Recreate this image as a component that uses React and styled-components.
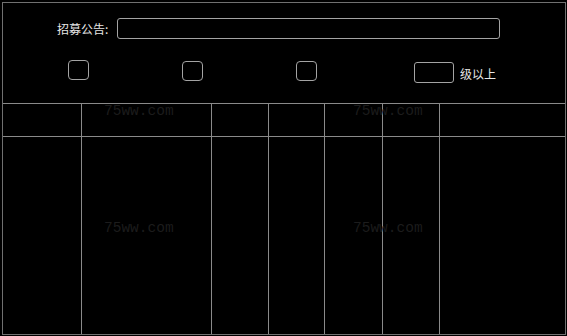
import React from "react";
import styled, { createGlobalStyle } from "styled-components";

const Global = createGlobalStyle`
  html, body { margin: 0; padding: 0; background: #000; }
  body { font-family: "Noto Sans CJK SC", "Noto Sans", sans-serif; }
  * { box-sizing: border-box; }
`;

const Frame = styled.div`
  margin: 2px 0 0 2px;
  width: 564px;
  height: 333px;
  border: 1px solid #707070;
  background: #000;
  display: flex;
  flex-direction: column;
`;

const Form = styled.div`
  height: 100px;
  padding-top: 14px;
  display: flex;
  flex-direction: column;
  gap: 21px;
`;

const TitleRow = styled.div`
  display: grid;
  grid-template-columns: 60px 383px;
  padding-left: 54px;
  align-items: center;
`;

const Label = styled.span`
  color: #e6e6e6;
  font-size: 12px;
  line-height: 21px;
  white-space: nowrap;
  padding-top: 1px;
`;

const TextBox = styled.div`
  width: ${(p) => p.$w}px;
  height: 21px;
  border: 1px solid #a4a4a4;
  border-radius: 3px;
  background: #000;
`;

const OptionRow = styled.div`
  display: grid;
  grid-template-columns: 114px 114px 118px auto;
  padding-left: 65px;
  align-items: start;
`;

const Check = styled.div`
  width: 21px;
  height: 20px;
  border: 1px solid #a4a4a4;
  border-radius: 4px;
  margin-top: ${(p) => p.$dy || 0}px;
`;

const LevelGroup = styled.div`
  display: flex;
  align-items: center;
  gap: 6px;
`;

const LevelText = styled.span`
  color: #e6e6e6;
  font-size: 12px;
  line-height: 21px;
  padding-top: 3px;
`;

const Table = styled.div`
  position: relative;
  flex: 1;
  display: grid;
  grid-template-columns: 78px 130px 57px 56px 58px 57px 126px;
  grid-template-rows: 33px 1fr;
  border-top: 1px solid #8a8a8a;
`;

const Cell = styled.div`
  border-left: ${(p) => (p.$first ? "none" : "1px solid #8a8a8a")};
  border-bottom: ${(p) => (p.$head ? "1px solid #8a8a8a" : "none")};
`;

const Watermark = styled.span`
  position: absolute;
  left: ${(p) => p.$x}px;
  top: ${(p) => p.$y}px;
  font-family: "Liberation Mono", "DejaVu Sans Mono", monospace;
  font-size: 14.5px;
  line-height: 15px;
  color: #1c1c1c;
  pointer-events: none;
  white-space: nowrap;
`;

const cols = [0, 1, 2, 3, 4, 5, 6];

export default function App() {
  return (
    <>
      <Global />
      <Frame>
        <Form>
          <TitleRow>
            <Label>招募公告:</Label>
            <TextBox $w={383} />
          </TitleRow>
          <OptionRow>
            <Check />
            <Check $dy={1} />
            <Check $dy={1} />
            <LevelGroup>
              <TextBox $w={40} />
              <LevelText>级以上</LevelText>
            </LevelGroup>
          </OptionRow>
        </Form>
        <Table>
          {cols.map((c) => (
            <Cell key={"h" + c} $first={c === 0} $head />
          ))}
          {cols.map((c) => (
            <Cell key={"b" + c} $first={c === 0} />
          ))}
          <Watermark $x={101} $y={0}>75ww.com</Watermark>
          <Watermark $x={350} $y={0}>75ww.com</Watermark>
          <Watermark $x={101} $y={117}>75ww.com</Watermark>
          <Watermark $x={350} $y={117}>75ww.com</Watermark>
        </Table>
      </Frame>
    </>
  );
}
